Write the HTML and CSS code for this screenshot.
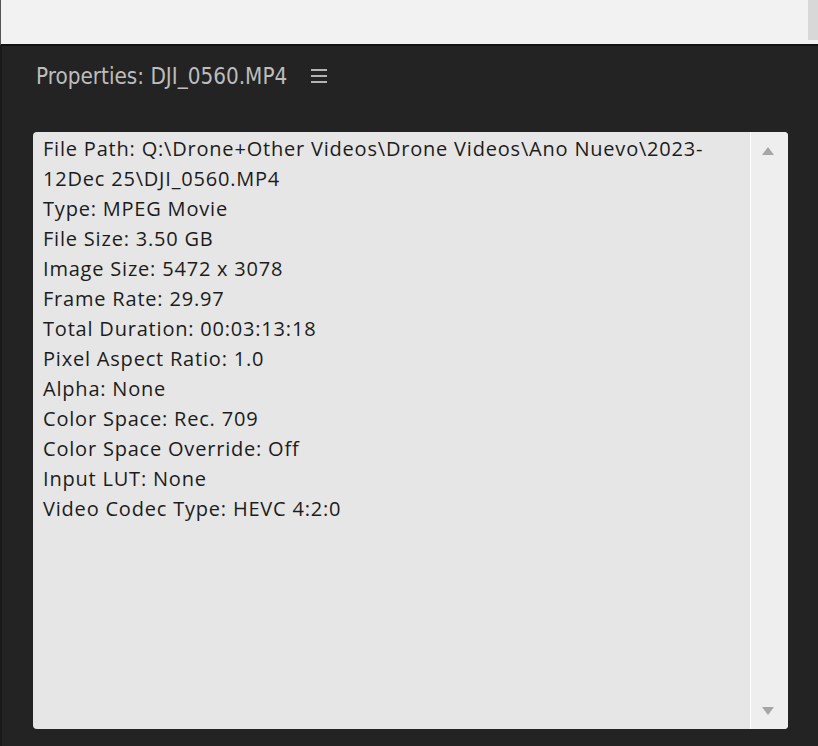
FILE: index.html
```html
<!DOCTYPE html>
<html>
<head>
<meta charset="utf-8">
<link rel="stylesheet" href="styles.css">
</head>
<body>
<div class="topbar">
  <div class="topbar-fill"></div>
  <div class="topbar-scroll"></div>
</div>
<div class="panel">
  <div class="header">
    <span class="title">Properties: DJI_0560.MP4</span>
    <span class="menu"><i></i><i></i><i></i></span>
  </div>
  <div class="box">
    <div class="content">
      <div class="line">File Path: Q:\Drone+Other Videos\Drone Videos\Ano Nuevo\2023-</div>
      <div class="line">12Dec 25\DJI_0560.MP4</div>
      <div class="line">Type: MPEG Movie</div>
      <div class="line">File Size: 3.50 GB</div>
      <div class="line">Image Size: 5472 x 3078</div>
      <div class="line">Frame Rate: 29.97</div>
      <div class="line">Total Duration: 00:03:13:18</div>
      <div class="line">Pixel Aspect Ratio: 1.0</div>
      <div class="line">Alpha: None</div>
      <div class="line">Color Space: Rec. 709</div>
      <div class="line">Color Space Override: Off</div>
      <div class="line">Input LUT: None</div>
      <div class="line">Video Codec Type: HEVC 4:2:0</div>
    </div>
    <div class="scrollbar">
      <span class="arrow up"></span>
      <span class="arrow down"></span>
    </div>
  </div>
</div>
</body>
</html>
```
FILE: styles.css
```css
html, body {
  margin: 0;
  padding: 0;
  width: 818px;
  height: 746px;
  overflow: hidden;
  background: #232323;
}
.topbar {
  height: 44px;
  display: flex;
  background: #f2f2f2;
  border-left: 1px solid #555;
  border-bottom: 2px solid #121212;
}
.topbar-fill { flex: 1; }
.topbar-scroll {
  width: 10px;
  height: 40px;
  background: #d8d8d8;
}
.panel {
  box-sizing: border-box;
  height: 700px;
  background: #232323;
  border-left: 2px solid #1a1a1a;
  display: flex;
  flex-direction: column;
  padding: 0 30px 17px 31px;
}
.header {
  height: 86px;
  flex: none;
  display: flex;
  align-items: flex-start;
  padding-top: 13px;
  padding-left: 3px;
  box-sizing: border-box;
}
.title {
  font-family: "DejaVu Sans Condensed", "DejaVu Sans", sans-serif;
  font-stretch: condensed;
  font-size: 22.3px;
  color: #bdbdbd;
  line-height: 34px;
}
.menu {
  display: flex;
  flex-direction: column;
  gap: 4px;
  margin-left: 24px;
  margin-top: 10px;
}
.menu i {
  display: block;
  width: 16px;
  height: 2px;
  background: #b3b3b3;
}
.box {
  flex: 1;
  display: flex;
  background: #e6e6e6;
  border-radius: 4px;
  overflow: hidden;
}
.content {
  flex: 1;
  padding: 2px 0 0 10px;
  font-family: "Open Sans", sans-serif;
  font-size: 20px;
  letter-spacing: 0.8px;
  line-height: 30px;
  color: #1c1c1c;
  white-space: nowrap;
}
.scrollbar {
  box-sizing: border-box;
  width: 38px;
  background: #eeeeee;
  border-left: 1px solid #ffffff;
  display: flex;
  flex-direction: column;
  justify-content: space-between;
  align-items: center;
  padding: 15px 4px 14px 0;
}
.arrow {
  width: 0;
  height: 0;
  border-left: 6px solid transparent;
  border-right: 6px solid transparent;
}
.arrow.up { border-bottom: 8px solid #a6a6a6; }
.arrow.down { border-top: 8px solid #a6a6a6; }
```
